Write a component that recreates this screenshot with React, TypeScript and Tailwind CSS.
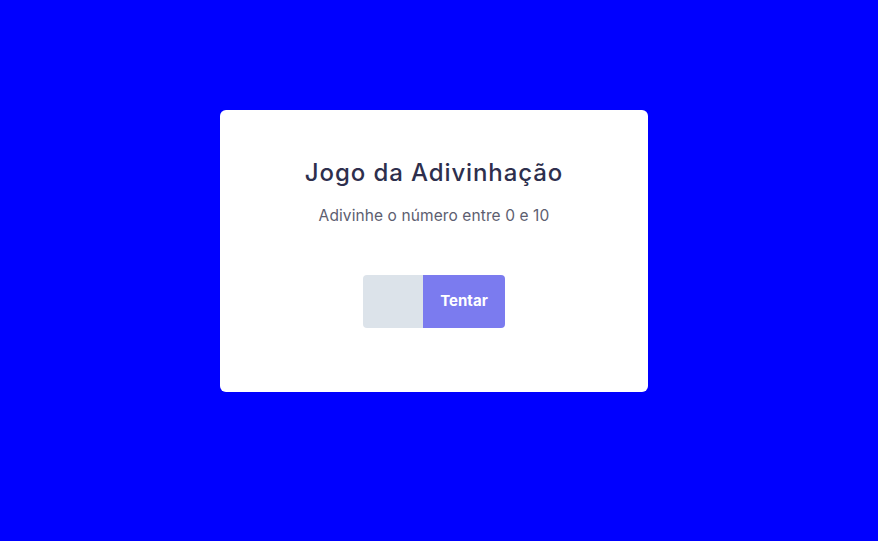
export default function App() {
  return (
    <div className="min-h-screen w-full bg-[#0000ff] flex justify-center pt-[110px] pr-[10px]">
      <div className="w-[428px] h-[282px] bg-white rounded-[6px] flex flex-col items-center">
        <h1 className="mt-[44px] text-[24px] leading-[37px] font-medium text-[#2e2f4d] font-['Inter',sans-serif] tracking-[0.9px]">
          Jogo da Adivinhação
        </h1>
        <p className="mt-[14px] text-[15.5px] leading-[22px] text-[#5d5e70] font-['Inter',sans-serif] tracking-[0.1px]">
          Adivinhe o número entre 0 e 10
        </p>
        <div className="mt-[48px] flex rounded-[4px] overflow-hidden">
          <input type="text" className="w-[60px] h-[53px] bg-[#dce3ea] outline-none" />
          <button className="w-[82px] h-[53px] bg-[#7b7bef] text-white text-[15px] font-bold font-['Inter',sans-serif]">
            Tentar
          </button>
        </div>
      </div>
    </div>
  );
}
